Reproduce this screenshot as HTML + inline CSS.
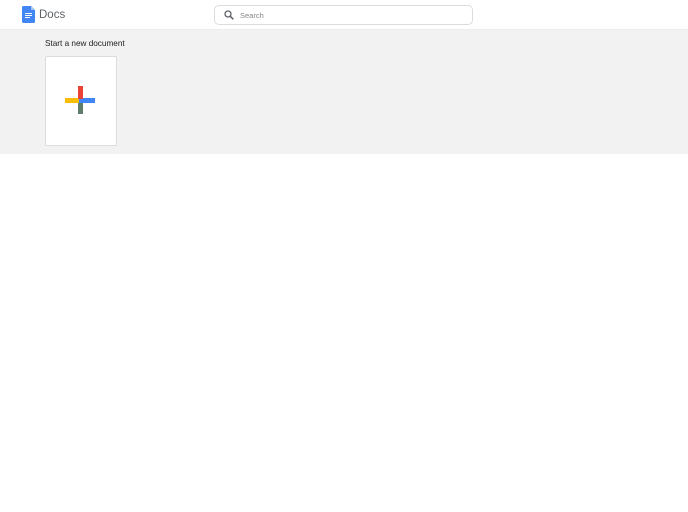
<!DOCTYPE html>
<html><head><meta charset="utf-8"><style>
html,body{margin:0;padding:0;width:688px;height:512px;background:#fff;font-family:"Liberation Sans",Arial,sans-serif;overflow:hidden;position:relative}
.hdr{position:absolute;left:0;top:0;width:688px;height:29px;background:#fff;border-bottom:1px solid #ebebeb}
.logo{position:absolute;left:22px;top:6px}
.docs{position:absolute;left:39px;top:9px;font-size:11.5px;color:#5f6368}
.search{position:absolute;left:214px;top:5px;width:257px;height:18px;border:1px solid #dadce0;border-radius:5px;background:#fff}
.search span{position:absolute;left:25px;top:5px;font-size:7.5px;color:#80868b}
.band{position:absolute;left:0;top:30px;width:688px;height:124px;background:#f2f2f2}
.title{position:absolute;left:45px;top:39px;font-size:8.2px;color:#202124}
.card{position:absolute;left:45px;top:56px;width:70px;height:88px;background:#fff;border:1px solid #dadce0;border-radius:2px}
.b{position:absolute}
</style></head><body>
<div class="hdr">
<svg class="logo" width="13" height="17" viewBox="0 0 13 17"><path d="M1.5 0H9l4 4v11.5a1.5 1.5 0 0 1-1.5 1.5h-10A1.5 1.5 0 0 1 0 15.5v-14A1.5 1.5 0 0 1 1.5 0z" fill="#4285f4"/><path d="M9 0v4h4z" fill="#a1c2fa"/><rect x="3" y="7" width="7" height="1" fill="#fff"/><rect x="3" y="9" width="7" height="1" fill="#fff"/><rect x="3" y="11" width="5" height="1" fill="#fff"/></svg>
<div class="docs">Docs</div>
<div class="search"><svg style="position:absolute;left:9px;top:4px" width="10" height="10" viewBox="0 0 10 10"><circle cx="4" cy="4" r="3" fill="none" stroke="#5f6368" stroke-width="1.3"/><path d="M6.2 6.2L9.3 9.3" stroke="#5f6368" stroke-width="1.5"/></svg><span>Search</span></div>
</div>
<div class="band"></div>
<div class="title">Start a new document</div>
<div class="card">
<div class="b" style="left:19px;top:41px;width:15px;height:5px;background:#fbbc04"></div>
<div class="b" style="left:33px;top:41px;width:16px;height:5px;background:#4285f4"></div>
<div class="b" style="left:32px;top:29px;width:5px;height:13px;background:#ea4335"></div>
<div class="b" style="left:32px;top:46px;width:5px;height:11px;background:#5f7d6a"></div>
</div>
</body></html>
